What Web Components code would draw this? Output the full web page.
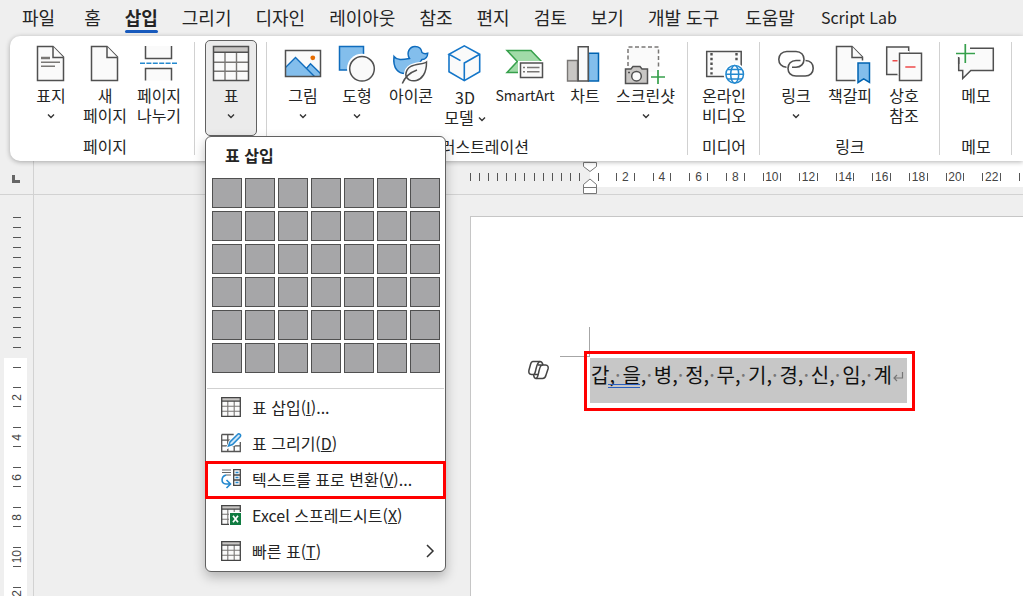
<!DOCTYPE html>
<html lang="ko">
<head>
<meta charset="utf-8">
<title>Word - 삽입</title>
<style>
  html, body { margin: 0; height: 100%; }
  body { overflow: hidden; background: #efefef; color: #242424; font: 16px/20px "Noto Sans CJK KR", "Noto Sans", sans-serif; }
</style>
</head>
<body>
<word-window>
  <ribbon-tabs slot="tabs">
    <ribbon-tab>파일</ribbon-tab><ribbon-tab class="home">홈</ribbon-tab><ribbon-tab selected>삽입</ribbon-tab><ribbon-tab>그리기</ribbon-tab><ribbon-tab>디자인</ribbon-tab><ribbon-tab>레이아웃</ribbon-tab><ribbon-tab>참조</ribbon-tab><ribbon-tab>편지</ribbon-tab><ribbon-tab>검토</ribbon-tab><ribbon-tab>보기</ribbon-tab><ribbon-tab>개발 도구</ribbon-tab><ribbon-tab class="spaced">도움말</ribbon-tab><ribbon-tab class="spaced latin">Script Lab</ribbon-tab>
  </ribbon-tabs>

  <ribbon-bar slot="ribbon">
    <ribbon-group label="페이지">
      <ribbon-button icon="cover" drop>표지</ribbon-button>
      <ribbon-button icon="blank">새<br>페이지</ribbon-button>
      <ribbon-button icon="break">페이지<br>나누기</ribbon-button>
    </ribbon-group>
    <ribbon-group>
      <ribbon-button icon="table" drop pressed>표<table-menu slot="menu"></table-menu></ribbon-button>
    </ribbon-group>
    <ribbon-group label="일러스트레이션">
      <ribbon-button icon="picture" drop>그림</ribbon-button>
      <ribbon-button icon="shapes" drop>도형</ribbon-button>
      <ribbon-button icon="icons">아이콘</ribbon-button>
      <ribbon-button icon="cube" inline-drop>3D<br>모델</ribbon-button>
      <ribbon-button icon="smartart" latin>SmartArt</ribbon-button>
      <ribbon-button icon="chart">차트</ribbon-button>
      <ribbon-button icon="screenshot" wide drop>스크린샷</ribbon-button>
    </ribbon-group>
    <ribbon-group label="미디어">
      <ribbon-button icon="video">온라인<br>비디오</ribbon-button>
    </ribbon-group>
    <ribbon-group label="링크">
      <ribbon-button icon="link" drop>링크</ribbon-button>
      <ribbon-button icon="bookmark">책갈피</ribbon-button>
      <ribbon-button icon="crossref">상호<br>참조</ribbon-button>
    </ribbon-group>
    <ribbon-group label="메모">
      <ribbon-button icon="comment">메모</ribbon-button>
    </ribbon-group>
  </ribbon-bar>

  <h-ruler slot="hruler"></h-ruler>
  <v-ruler slot="vruler"></v-ruler>
  <doc-page slot="page"></doc-page>
</word-window>

<script>
const G = '#505050', B = '#0f6cbd', BF = '#83beec', P = '#fafafa';
const pageShape = `<path d="M6.500 2.500H22L32.500 13V36.500H6.500Z" fill="${P}" stroke="${G}" stroke-width="1.500"/><path d="M22 2.500V13.500H32.500" fill="${P}" stroke="${G}" stroke-width="1.500"/>`;
const ICONS = {
  cover: pageShape + `<path d="M10 14h9" stroke="#797775" stroke-width="2.500"/><path d="M10 18.300h19M10 22.300h14" stroke="#797775" stroke-width="1.400"/>`,
  blank: pageShape,
  break: `<path d="M6.500 2V14.500H32.500V2M6.500 36.500V24.500H32.500V36.500" fill="${P}" stroke="${G}" stroke-width="1.500"/><path d="M1 19.200H38" stroke="#2489cf" stroke-width="1.500" stroke-dasharray="5 1.400"/>`,
  table: `<path d="M2.500 2.500h35v34h-35z" fill="${P}"/><path d="M2.500 2.500h35v6h-35z" fill="#c8c6c4"/><path d="M14 8v28M25.500 8v28M3 18.200h34M3 27.200h34" stroke="#797775" stroke-width="1.400"/><path d="M2.500 2.500h35v34h-35zM2.500 8.300h35" fill="none" stroke="${G}" stroke-width="1.500"/>`,
  picture: `<path d="M2.500 6.500h35v26h-35z" fill="${P}"/><path d="M3 23.500 12.500 13.500 23.600 24.500 27.500 19.800 37 29V32H3Z" fill="${BF}"/><path d="M2.500 23.500 12.500 13.500 31.500 32.500M23.600 24.200 27.500 19.800 37.500 29.500" fill="none" stroke="${B}" stroke-width="1.400"/><path d="M2.500 6.500h35v26h-35z" fill="none" stroke="${G}" stroke-width="1.500"/><circle cx="29.800" cy="13.800" r="2.400" fill="#e66c00"/>`,
  shapes: `<path d="M2.500 2.500h24v23.500h-24z" fill="${BF}" stroke="${B}" stroke-width="1.500"/><circle cx="25" cy="24.800" r="15" fill="#fff"/><circle cx="25" cy="24.800" r="12.300" fill="${P}" stroke="${G}" stroke-width="1.500"/>`,
  icons: `<path d="M3 12.500C6 16.500 11 16 18.500 14.500 15 9 18.500 2.500 24 2.500 28 2.500 30.500 5 31 8.500 33 10.200 35 9.800 36.700 9.300 36.500 13 34.500 15.500 31 15.500 30 17 29 18 28 20L14 29.500C8 29.500 1.500 25 3 12.500Z" fill="${BF}" stroke="${B}" stroke-width="1.500"/><path d="M35.500 18C31 21.500 16 18 14.800 30.500 15 40 36 41 35.500 18Z" fill="#fff" stroke="#fff" stroke-width="4"/><path d="M35.500 18C31 21.500 16 18 14.800 30.500 15 40 36 41 35.500 18Z" fill="${P}" stroke="${G}" stroke-width="1.500"/><path d="M11.300 39.500C14 33 19 28.500 26 26" fill="none" stroke="${G}" stroke-width="1.500"/>`,
  cube: `<path d="M19.300 1.800 34.700 10.300V27.700L19.300 36.600 4 27.700V10.300Z" fill="${P}"/><path d="M15.500 16.600 4 10.300 19.300 1.800 34.700 10.300V27.700L19.300 36.600 4 27.700V10.300M19.300 36.600V19L34.700 10.300" fill="none" stroke="#1476c9" stroke-width="1.600"/>`,
  smartart: `<path d="M2 6.500H26L36.500 17.500 26 28.500H2L12.300 17.500Z" fill="#a1dba8" stroke="#37a04c" stroke-width="1.500"/><path d="M13 17h27v19H13z" fill="#fff"/><path d="M15.500 19h22v14.500h-22z" fill="${P}" stroke="${G}" stroke-width="1.500"/><path d="M18 23.500h2M22 23.500h12.500M18 27.800h2M22 27.800h12.500" stroke="#797775" stroke-width="1.400"/>`,
  chart: `<path d="M2.500 16.500h10v20.500h-10z" fill="#c8c6c4" stroke="#797775" stroke-width="1.400"/><path d="M23.500 9.300h10v27.700h-10z" fill="${BF}" stroke="#0063b1" stroke-width="1.500"/><path d="M13.200 2.700h10v34.300h-10z" fill="${P}" stroke="${G}" stroke-width="1.500"/>`,
  screenshot: `<path d="M2 3h30.500v25H2z" fill="${P}"/><path d="M2 22V3H32.500V25" fill="none" stroke="#797775" stroke-width="1.500" stroke-dasharray="4 2.500"/><path d="M-.5 25H5L7 22.500H14L16 25H21.500V39.500H-.5Z" fill="#c8c6c4" stroke="${G}" stroke-width="1.500"/><circle cx="10.500" cy="32.200" r="4.800" fill="${P}" stroke="${G}" stroke-width="1.500"/><path d="M2 28.500h2" stroke="${G}" stroke-width="1.500"/><path d="M32 25.500v14M25 33h14" stroke="#fff" stroke-width="4"/><path d="M32 26v14M25 33h14" stroke="#37a04c" stroke-width="1.700"/>`,
  video: `<path d="M2.700 7.500h34.500v25H2.700z" fill="${P}" stroke="${G}" stroke-width="1.500"/><path d="M7.500 9v22M32.500 9v9" stroke="${G}" stroke-width="2.400" stroke-dasharray="2.400 2.400"/><circle cx="30.700" cy="30.300" r="11" fill="#fff"/><g fill="#fff" stroke="#2489cf" stroke-width="1.500"><circle cx="30.700" cy="30.300" r="8.800"/><ellipse cx="30.700" cy="30.300" rx="4" ry="8.800"/><path d="M22 30.300h17.500M23.500 25.500h14.500M23.500 35h14.500"/></g>`,
  link: `<g fill="none" stroke="${G}" stroke-width="1.600"><path d="M10.500 23.200C5.500 23 2.800 19.500 2.800 15.300 2.800 11 6 7.500 10.800 7.500H20C25 7.500 28 11 28 15.300 28 19.500 25 23.200 20 23.200H16"/><path d="M29.500 16.500C34.500 16.700 37.200 20 37.200 24.300 37.200 28.800 34 32 29.200 32H20C15 32 12 28.800 12 24.300 12 20 15 16.500 20 16.500H24.500"/></g>`,
  bookmark: pageShape + `<path d="M25.500 16.500h14v24h-14z" fill="#fff"/><path d="M28 19h11.500V38.500L33.700 34.800 28 38.500Z" fill="${BF}" stroke="#0063b1" stroke-width="1.500"/>`,
  crossref: `<path d="M2.700 3h22v27.500h-22z" fill="${P}" stroke="${G}" stroke-width="1.500"/><path d="M13.500 7h12v24.500h-12z" fill="#fff"/><path d="M15.500 9.200h22v27.300h-22z" fill="${P}" stroke="${G}" stroke-width="1.500"/><path d="M8.500 16.700h5M21.300 23h10.200" stroke="#ee4b4b" stroke-width="1.500"/>`,
  comment: `<path d="M2.700 12V26.500H6.700V34.500L14.800 26.500H37.300V4.200H14" fill="${P}" stroke="${G}" stroke-width="1.500"/><path d="M2 4h10v10H2z" fill="#fff"/><path d="M9.300 0v19M0 9.500h19" stroke="#fff" stroke-width="4"/><path d="M2.700 13v7" stroke="${G}" stroke-width="1.500"/><path d="M9.300 0v19M0 9.500h19" stroke="#37a04c" stroke-width="1.700"/>`
};
const SMALL_GRID = `<path d="M.7.700h18.600v18.600H.7z" fill="${P}"/><path d="M.7.700h18.600v3.500H.7z" fill="#c8c6c4"/><path d="M6.800 4v15M13.200 4v15M1 9.200h18M1 14.200h18" stroke="#797775" stroke-width="1.100"/><path d="M.7.700h18.600v18.600H.7zM.7 4.200h18.600" fill="none" stroke="#444" stroke-width="1.300"/>`;
const SMALL = {
  grid: SMALL_GRID,
  draw: `<path d="M.7 1.500h12M.7 1.500v17h18.600V9M1 7.200h10M1 12.800h18M6.800 2v16M13.200 11v7" fill="none" stroke="#555" stroke-width="1.300"/><path d="M6 15 9 8 16 1h4v4l-7 7z" fill="#fff" stroke="#fff" stroke-width="2"/><path d="M7.500 13 9 9 16.500 1.500C18-.2 21 2 19 4L11.500 11.500Z" fill="#cfe6f8" stroke="#2489cf" stroke-width="1.500"/>`,
  convert: `<path d="M1 1h9M5 6h5M1 3.500h9" stroke="#666" stroke-width="1.200"/><path d="M12.700.700h6.600v15.600h-6.600zM12.700 6h6.600M12.700 11h6.600" fill="${P}" stroke="#444" stroke-width="1.300"/><path d="M14.500 3.500h3M14.500 8.500h3M14.500 13.500h3" stroke="#2489cf" stroke-width="1.300"/><path d="M5 6C0 7.500-.5 14.500 5 15H9M5.500 11 9.500 15 5.500 19" fill="none" stroke="#2489cf" stroke-width="1.600"/>`,
  excel: SMALL_GRID + `<path d="M8 7h12v13H8z" fill="#fff"/><path d="M9 8h11v12H9z" fill="#107c41"/><path d="M12 10.800 17 17.200M17 10.800 12 17.200" stroke="#fff" stroke-width="1.700"/>`
};
const CHEVRON = `<svg class="chev" width="8" height="6" viewBox="0 0 8 6" aria-hidden="true"><path d="M1 1.500 4 4.500 7 1.500" fill="none" stroke="#333" stroke-width="1.400"/></svg>`;

function define(name, render) {
  customElements.define(name, class extends HTMLElement {
    constructor() { super(); this.attachShadow({ mode: 'open' }); }
    connectedCallback() { if (!this.shadowRoot.firstChild) this.shadowRoot.innerHTML = render(this); }
  });
}

define('word-window', () => `
<style>
  :host { display: flex; flex-direction: column; height: 100vh; overflow: hidden; }
  .work { flex: 1; display: grid; grid-template-columns: 34px 1fr; grid-template-rows: 34px 1fr; min-height: 0; }
  .corner, .h { border-bottom: 1px solid #d2d2d2; }
  .corner, .v { border-right: 1px solid #d2d2d2; }
  .corner { display: flex; align-items: center; padding: 3px 0 0 12px; }
  .corner i { width: 5px; height: 5px; border: solid #666; border-width: 0 0 3px 3px; }
  .h, .v, .p { min-width: 0; min-height: 0; overflow: hidden; }
  .p { display: flex; }
</style>
<slot name="tabs"></slot><slot name="ribbon"></slot>
<div class="work">
  <div class="corner"><i></i></div>
  <div class="h"><slot name="hruler"></slot></div>
  <div class="v"><slot name="vruler"></slot></div>
  <div class="p"><slot name="page"></slot></div>
</div>`);

define('ribbon-tabs', () => `
<style>
  :host { display: block; }
  nav { display: flex; height: 36px; padding-left: 10px; }
  ::slotted(.home) { margin-left: 5px; }
  ::slotted(.spaced) { margin-left: 2px; }
</style>
<nav aria-label="리본 탭"><slot></slot></nav>`);

define('ribbon-tab', el => `
<style>
  :host { display: block; font-size: 18px; line-height: 24px; }
  :host(.latin) { font-size: 16px; }
  button { display: block; border: 0; background: none; color: inherit; font: inherit; padding: 5px 12px 0; white-space: nowrap; }
  :host([selected]) button { font-weight: 700; }
  :host([selected]) button::after { content: ""; display: block; height: 3px; margin-top: 1px; border-radius: 2px; background: #185abd; }
</style>
<button type="button"${el.hasAttribute('selected') ? ' aria-current="page"' : ''}><slot></slot></button>`);

define('ribbon-bar', () => `
<style>
  :host { display: flex; position: relative; z-index: 2; margin-left: 10px; padding-left: 5px; height: 125px; background: #fff; border-radius: 10px 0 0 10px; box-shadow: 0 1px 5px rgba(0,0,0,.3); }
</style><slot></slot>`);

define('ribbon-group', el => `
<style>
  :host { display: flex; flex: none; }
  section { display: flex; flex-direction: column; justify-content: space-between; align-items: center; padding: 4px 8px 5px 9px; }
  .row { display: flex; }
  h2 { margin: 0; font: inherit; white-space: nowrap; }
  hr { width: 1px; margin: 6px 0; border: 0; background: #d1d1d1; }
</style>
<section><div class="row"><slot></slot></div>${el.getAttribute('label') ? `<h2>${el.getAttribute('label')}</h2>` : ''}</section><hr>`);

define('ribbon-button', el => `
<style>
  :host { display: block; position: relative; width: 54px; }
  :host([wide]) { width: 67px; }
  :host([latin]) { width: 66px; }
  :host([latin]) .text { font-size: 14px; }
  button { box-sizing: border-box; display: flex; flex-direction: column; align-items: center; width: 100%; height: 96px; padding: 4px 0 0; border: 0; background: none; color: inherit; font: inherit; text-align: center; white-space: nowrap; }
  .icon { overflow: visible; flex: none; margin-bottom: 1px; }
  .chev { flex: none; }
  button > .chev { margin-top: 8px; }
  .text { display: block; }
  :host([inline-drop]) .text { padding-top: 2px; }
  :host([pressed]) button { margin: 0 1px; width: 52px; padding-top: 3px; border: 1px solid #616161; border-radius: 5px; background: #ebebeb; }
  :host([inline-drop]) .chev { margin: 0 0 2px 4px; }
</style>
<button type="button"${el.hasAttribute('pressed') ? ' aria-expanded="true"' : ''}><svg class="icon" width="40" height="40" viewBox="0 0 40 40" aria-hidden="true">${ICONS[el.getAttribute('icon')]}</svg><span class="text"><slot></slot>${el.hasAttribute('inline-drop') ? CHEVRON : ''}</span>${el.hasAttribute('drop') ? CHEVRON : ''}</button><slot name="menu"></slot>`);

define('table-menu', () => `
<style>
  :host { position: absolute; z-index: 3; top: 96px; left: 1px; box-sizing: border-box; width: 241px; padding-bottom: 2px; background: #fff; border: 1px solid #616161; border-radius: 6px; box-shadow: 0 5px 12px rgba(0,0,0,.25); }
  h3 { margin: 0; padding: 8px 19px 12px; font-size: 16px; line-height: 21px; font-weight: 700; }
  .cells { display: grid; grid-template-columns: repeat(7, 30px); gap: 3px; padding: 0 6px; }
  .cells button { height: 30px; padding: 0; border: 1px solid #505050; background: #a6a6a8; }
  hr { margin: 15px 1px 0; border: 0; height: 1px; background: #d1d1d1; }
</style>
<h3>표 삽입</h3>
<div class="cells">${Array.from({ length: 42 }, (_, i) => `<button type="button" aria-label="${i % 7 + 1}x${Math.floor(i / 7) + 1}"></button>`).join('')}</div>
<hr>
<menu-item icon="grid">표 삽입(<u>I</u>)...</menu-item>
<menu-item icon="draw">표 그리기(<u>D</u>)</menu-item>
<menu-item icon="convert" marked>텍스트를 표로 변환(<u>V</u>)...</menu-item>
<menu-item icon="excel">Excel 스프레드시트(<u>X</u>)</menu-item>
<menu-item icon="grid" more>빠른 표(<u>T</u>)</menu-item>`);

define('menu-item', el => `
<style>
  :host { display: block; position: relative; }
  button { display: flex; align-items: center; gap: 11px; width: 100%; height: 36px; padding: 0 10px 0 15px; border: 0; background: none; color: inherit; font: inherit; white-space: nowrap; }
  .icon { overflow: visible; flex: none; }
  .more { margin-left: auto; }
  :host([marked])::after { content: ""; position: absolute; inset: 0 -1px -2px; border: 3px solid #f00; pointer-events: none; }
</style>
<button type="button"><svg class="icon" width="20" height="20" viewBox="0 0 20 20" aria-hidden="true">${SMALL[el.getAttribute('icon')]}</svg><span><slot></slot></span>${el.hasAttribute('more') ? '<svg class="more" width="10" height="14" viewBox="0 0 10 14" aria-hidden="true"><path d="M2 1 8 7 2 13" fill="none" stroke="#333" stroke-width="1.500"/></svg>' : ''}</button>`);

define('h-ruler', () => `
<style>
  :host { display: flex; position: relative; height: 26px; padding-left: 436px; font: 12px/32px "Liberation Sans", sans-serif; color: #444; }
  .left { display: flex; flex: none; justify-content: space-between; align-items: center; width: 110px; padding: 6px 10px 0 0; }
  i { flex: none; width: 1px; height: 8px; background: #555; }
  .right { flex: 1; display: flex; padding-left: 8px; overflow: hidden; background: #fff; }
  .right > i { align-self: center; margin-top: 6px; }
  .start { margin-right: 8px; }
  .scale { flex: none; display: grid; grid-template-columns: repeat(11, 1fr); width: 403px; }
  .scale span { display: flex; align-items: center; justify-content: space-between; padding: 0 9px; }
  .end { margin-left: 9px; }
  b { font-weight: 400; width: 0; display: flex; justify-content: center; }
  svg { position: absolute; left: 549px; top: 1px; }
</style>
<div class="left">${'<i></i>'.repeat(13)}</div>
<div class="right"><i class="start"></i><div class="scale">${Array.from({ length: 11 }, (_, i) => `<span><i></i><b>${i * 2 + 2}</b><i></i></span>`).join('')}</div><i class="end"></i></div>
<svg width="15" height="32" viewBox="0 0 15 32" aria-hidden="true"><g fill="#fff" stroke="#777"><path d="M.5.500h13v4L7 9.500.500 4.500Z"/><path d="M.5 31.500h13v-9L7 17 .5 22.500ZM.5 25.500h13"/></g></svg>`);

define('v-ruler', () => `
<style>
  :host { display: block; padding-top: 17px; font: 12px/12px "Liberation Sans", sans-serif; color: #444; }
  i { display: block; width: 8px; height: 1px; background: #555; }
  .off { display: grid; grid-auto-rows: 10px; align-items: center; padding: 0 0 6px 13px; }
  .on { width: 14px; margin-left: 4px; padding-left: 9px; background: #fff; }
  .first { display: flex; align-items: center; height: 19px; }
  .unit { display: flex; flex-direction: column; justify-content: space-between; height: 40px; box-sizing: border-box; padding: 10px 0; }
  b { display: flex; align-items: center; justify-content: center; height: 0; width: 8px; font-weight: 400; }
  b span { writing-mode: vertical-rl; rotate: 180deg; }
</style>
<div class="off">${'<i></i>'.repeat(14)}</div>
<div class="on"><div class="first"><i></i></div>${[2, 4, 6, 8, 10, 12].map(n => `<div class="unit"><i></i><b><span>${n}</span></b><i></i></div>`).join('')}</div>`);

define('doc-page', () => `
<style>
  :host { display: block; flex: 1; box-sizing: border-box; margin: 21px 0 0 436px; padding: 110px 0 0 57px; background: #fff; border: solid #c6c6c6; border-width: 1px 0 0 1px; color: #111; }
  .mark { width: 29px; height: 29px; margin-left: 32px; border: solid #a6a6a6; border-width: 0 1px 1px 0; }
  .body { display: flex; align-items: flex-start; gap: 35px; }
  button { border: 0; padding: 0; margin-top: 3px; background: none; display: block; }
  .frame { border: 3px solid #f00; padding: 4px 5px 5px 3px; margin-top: -6px; }
  p { box-sizing: border-box; margin: 0; width: 317px; height: 45px; padding: 3px 2px 0 1px; background: #c7c7c7; display: grid; grid-template-columns: repeat(10, 1fr); font-size: 20px; line-height: 28px; white-space: nowrap; }
  p > span { position: relative; }
  small { font-size: 20px; color: #777; }
  .grammar::before { content: ""; position: absolute; left: 17px; top: 23px; width: 32px; height: 2px; border: solid #2b5fc0; border-width: 1px 0; z-index: 1; }
</style>
<div class="mark"></div>
<div class="body">
  <button type="button" aria-label="Copilot"><svg width="21" height="20" viewBox="0 0 21 20" aria-hidden="true"><g fill="none" stroke="#444" stroke-width="1.500" stroke-linejoin="round"><path d="M5 1.500H12C14 1.500 14.500 3 15 5H17.500C20 5 20.500 7 20 9L18 15C17.500 17.500 16.500 18.500 14.500 18.500H8C6 18.500 6 17 5.500 14.500H3.500C1 14.500.5 12.500 1 10L2.500 4.500C3 2.500 3.500 1.500 5 1.500Z"/><path d="M12 1.500C9.500 2 9 5 8 9 7 13 7 14.500 5.500 14.500M15 5C12.500 5 12 7 11 11 10 15 10 18 8 18.500M10 5H15M5.500 14.500H10"/></g></svg></button>
  <div class="frame"><p>${[...'갑을병정무기경신임'].map((c, i) => `<span${i ? '' : ' class="grammar"'}>${c},<small>·</small> </span>`).join('')}<span>계<svg width="12" height="12" viewBox="0 0 12 12" aria-label="단락 기호"><path d="M10.500 1V7H2M5 4 2 7 5 10" fill="none" stroke="#777" stroke-width="1.200"/></svg></span></p></div>
</div>`);
</script>
</body>
</html>
